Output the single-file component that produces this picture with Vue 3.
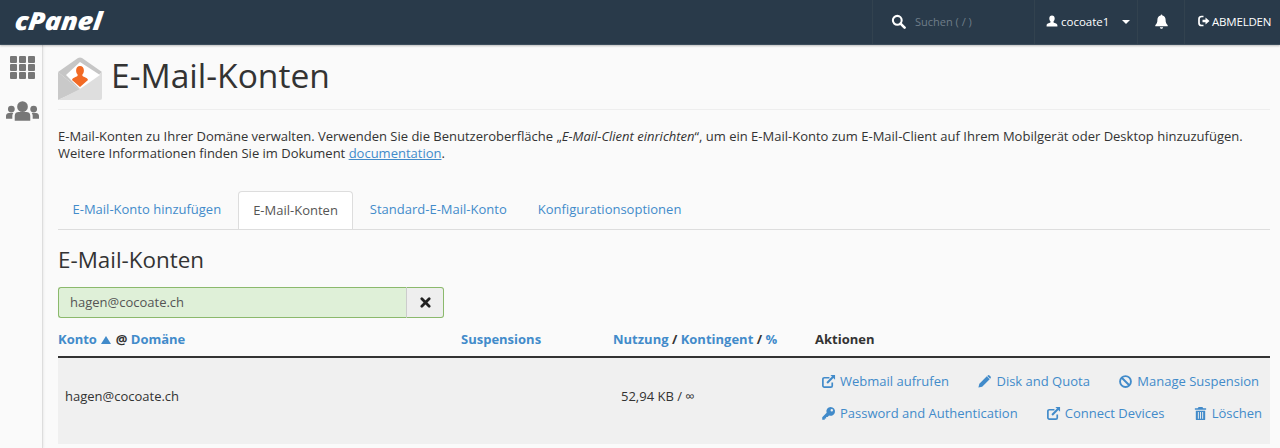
<script setup>
const rowOne = [
  { label: 'Webmail aufrufen', icon: 'ext' },
  { label: 'Disk and Quota', icon: 'pencil' },
  { label: 'Manage Suspension', icon: 'ban' }
]
const rowTwo = [
  { label: 'Password and Authentication', icon: 'key' },
  { label: 'Connect Devices', icon: 'ext' },
  { label: 'Löschen', icon: 'trash' }
]
const tabs = [
  { label: 'E-Mail-Konto hinzufügen', active: false },
  { label: 'E-Mail-Konten', active: true },
  { label: 'Standard-E-Mail-Konto', active: false },
  { label: 'Konfigurationsoptionen', active: false }
]
</script>

<template>
  <div class="page">
    <header class="topbar">
      <div class="logo">cPanel</div>
      <div class="top-right">
        <div class="search cell">
          <svg class="search-ico" viewBox="0 0 16 16"><circle cx="6.7" cy="6.7" r="4.7" fill="none" stroke="#fff" stroke-width="2.2"/><path d="M10.2 10.2 L14.5 14.5" stroke="#fff" stroke-width="2.8" stroke-linecap="round"/></svg>
          <span class="search-text">Suchen ( / )</span>
        </div>
        <div class="user cell">
          <svg class="user-ico" viewBox="0 0 12 12"><path d="M6 0.5c1.7 0 2.7 1.3 2.7 3 0 1.200-.5 2.300-1.200 2.900v.9c0 .6 3.900 1 3.900 2.900V11.500H.6V10.200c0-1.900 3.900-2.300 3.900-2.900v-.9C3.800 5.800 3.300 4.700 3.300 3.500c0-1.700 1-3 2.700-3z" fill="#fff"/></svg>
          <span>cocoate1</span>
          <span class="caret"></span>
        </div>
        <div class="bell cell">
          <svg class="bell-ico" viewBox="0 0 14 14"><path d="M7 .5c.5 0 .8.3.8.8 2 .4 3 2 3 3.900 0 3.200 1 4.300 2 5.300v1H1.200v-1c1-1 2-2.100 2-5.300 0-1.900 1-3.500 3-3.900 0-.5.300-.8.800-.8zM5.500 12.300h3c0 .9-.7 1.400-1.500 1.400s-1.500-.5-1.500-1.400z" fill="#fff"/></svg>
        </div>
        <div class="logout">
          <svg class="logout-ico" viewBox="0 0 12 12"><path d="M5.500 1.500H3.500C2 1.500 1 2.500 1 4v4c0 1.500 1 2.500 2.500 2.500h2" fill="none" stroke="#fff" stroke-width="1.700"/><path d="M4.500 4.800H7.500V2.600L11.500 6 7.500 9.400V7.200H4.500z" fill="#fff"/></svg>
          <span>ABMELDEN</span>
        </div>
      </div>
    </header>

    <div class="body">
      <aside class="side">
        <div class="grid-ico">
          <i v-for="n in 9" :key="n"></i>
        </div>
        <svg class="users-ico" viewBox="0 0 34 20">
          <circle cx="17" cy="5.500" r="5.500" fill="#777"/>
          <circle cx="5.500" cy="8" r="3.500" fill="#777"/>
          <circle cx="28.500" cy="8" r="3.500" fill="#777"/>
          <path d="M9 20v-5c0-3 2-4 4-4h8c2 0 4 1 4 4v5z" fill="#777"/>
          <path d="M0 18v-3c0-2 1.500-3 3-3h4.500c-.8 1-1 2-1 3v3zM34 18v-3c0-2-1.500-3-3-3h-4.500c.8 1 1 2 1 3v3z" fill="#777"/>
        </svg>
      </aside>

      <main class="main">
        <div class="title-row">
          <svg class="mail-ico" viewBox="0 0 44 43">
            <path d="M0 15 L20 1 Q22 0 24 1 L44 15 L22 33z" fill="#c6c6c6"/>
            <path d="M0 15 L22 33 L0 43z" fill="#c9c9c9"/>
            <path d="M0 43 L22 32 L44 15 V41 Q44 43 42 43z" fill="#dedede"/>
            <path d="M22 5 L42 18 L22 32 L8 18z" fill="#fff"/>
            <path d="M22 9c2.500 0 3.900 2 3.900 4.500 0 1.800-.7 3.200-1.500 4.100v1.200c0 1 5 1.500 5.600 4.200L22 30l-8-7c.6-2.700 5.600-3.200 5.600-4.200v-1.200c-.8-.9-1.500-2.300-1.500-4.100C18.100 11 19.500 9 22 9z" fill="#f26a25"/>
          </svg>
          <h1>E-Mail-Konten</h1>
        </div>

        <p class="intro">E-Mail-Konten zu Ihrer Domäne verwalten. Verwenden Sie die Benutzeroberfläche „<em>E-Mail-Client einrichten</em>“, um ein E-Mail-Konto zum E-Mail-Client auf Ihrem Mobilgerät oder Desktop hinzuzufügen.<br>Weitere Informationen finden Sie im Dokument <a class="doc">documentation</a>.</p>

        <nav class="tabs">
          <div v-for="t in tabs" :key="t.label" class="tab" :class="{ active: t.active }">{{ t.label }}</div>
        </nav>

        <h2>E-Mail-Konten</h2>

        <div class="filter">
          <div class="filter-input">hagen@cocoate.ch</div>
          <div class="filter-btn">
            <svg viewBox="0 0 12 12" class="x-ico"><path d="M2 2 L10 10 M10 2 L2 10" stroke="#222" stroke-width="3" stroke-linecap="round"/></svg>
          </div>
        </div>

        <div class="thead">
          <div class="c-acct"><b>Konto</b> <span class="tri"></span> <b class="at">@</b> <b>Domäne</b></div>
          <div class="c-susp"><b>Suspensions</b></div>
          <div class="c-use"><b>Nutzung</b> <b class="at">/</b> <b>Kontingent</b> <b class="at">/</b> <b>%</b></div>
          <div class="c-act"><b class="at">Aktionen</b></div>
        </div>

        <div class="tbody">
          <div class="r-mail">hagen@cocoate.ch</div>
          <div class="r-use">52,94 KB / ∞</div>
          <div class="r-actions">
            <div v-for="(row, i) in [rowOne, rowTwo]" :key="i" class="act-row">
              <span v-for="a in row" :key="a.label" class="act">
                <svg class="a-ico" viewBox="0 0 16 16">
                  <template v-if="a.icon === 'ext'">
                    <path d="M12 9v3.500c0 .8-.7 1.500-1.500 1.500h-7C2.700 14 2 13.300 2 12.500v-7C2 4.700 2.700 4 3.500 4H9" fill="none" stroke="#428bca" stroke-width="1.800"/>
                    <path d="M6.500 9.500 L13 3" stroke="#428bca" stroke-width="2.200"/>
                    <path d="M10 1h5v5z" fill="#428bca"/>
                  </template>
                  <path v-else-if="a.icon === 'pencil'" d="M1.500 14.500 L2.500 10.500 L10.500 2.500 L13.500 5.500 L5.500 13.500z M11.500 1.500 Q12.500 .8 13.300 1.500 L14.500 2.700 Q15.200 3.500 14.500 4.500 L14 5 L11 2z" fill="#428bca"/>
                  <template v-else-if="a.icon === 'ban'">
                    <circle cx="8" cy="8" r="5.800" fill="none" stroke="#428bca" stroke-width="2"/>
                    <path d="M4 4 L12 12" stroke="#428bca" stroke-width="2"/>
                  </template>
                  <path v-else-if="a.icon === 'key'" fill-rule="evenodd" d="M10.300 1a4.700 4.700 0 1 1-1.700 9.100L7 11.700H5.500v1.500H4V14.700H1.300V12L6 7.300A4.700 4.700 0 0 1 10.300 1zM11.500 3.200a1.300 1.300 0 1 0 0 2.600 1.300 1.300 0 0 0 0-2.600z" fill="#428bca"/>
                  <path v-else fill-rule="evenodd" d="M6 1h4l1 1.500h3v1.500H2V2.500h3zM3 5h10v9c0 .6-.5 1-1 1H4c-.5 0-1-.4-1-1zM5.200 6.500v7h1v-7zM7.500 6.500v7h1v-7zM9.800 6.500v7h1v-7z" fill="#428bca"/>
                </svg>{{ a.label }}
              </span>
            </div>
          </div>
        </div>
      </main>
    </div>
  </div>
</template>

<style>
html, body { margin: 0; background: #fafafa; overflow: hidden; }
</style>

<style scoped>
.page {
  width: 1280px;
  height: 448px;
  overflow: hidden;
  font-family: "Open Sans", sans-serif;
  color: #333;
  background: #fafafa;
}
.topbar {
  height: 45px;
  background: #293a4a;
  border-bottom: 1px solid #3c4d5c;
  box-sizing: border-box;
  display: flex;
  justify-content: space-between;
  box-shadow: 0 1px 2px rgba(0,0,0,.25);
  position: relative;
  z-index: 2;
}
.logo {
  margin-left: 15px;
  font-family: "Open Sans", sans-serif;
  font-size: 25px;
  font-weight: 800;
  font-style: italic;
  letter-spacing: -.2px;
  color: #fff;
  line-height: 41px;
  transform: scaleX(1.08) skewX(-6deg);
  transform-origin: left center;
}
.top-right { display: flex; height: 44px; color: #fff; font-size: 11.500px; }
.cell { display: flex; align-items: center; border-right: 1px solid #32424f; box-sizing: border-box; padding-bottom: 2px; }
.search { width: 163px; padding-left: 18px; border-left: 1px solid #32424f; }
.search-ico { width: 15px; height: 15px; margin-right: 9px; }
.search-text { color: #6f7d89; font-size: 11px; }
.user { width: 103px; padding-left: 11px; }
.user-ico { width: 12px; height: 12px; margin-right: 3px; }
.caret { width: 0; height: 0; border-left: 4px solid transparent; border-right: 4px solid transparent; border-top: 4px solid #fff; margin-left: 13px; margin-top: 2px; }
.bell { width: 47px; justify-content: center; }
.bell-ico { width: 15px; height: 15px; }
.logout { width: 95px; display: flex; align-items: center; padding-left: 13px; padding-bottom: 2px; box-sizing: border-box; font-size: 11.500px; letter-spacing: -.2px; }
.logout-ico { width: 12px; height: 12px; margin-right: 2px; }

.body { display: flex; height: 403px; }
.side {
  width: 43px;
  flex: none;
  box-sizing: border-box;
  background: #fafafa;
  border-right: 1px solid #ddd;
  box-shadow: 1px 0 2px rgba(0,0,0,.06);
  display: flex;
  flex-direction: column;
  align-items: center;
  padding-top: 11px;
  padding-left: 3px;
}
.grid-ico { display: grid; grid-template-columns: repeat(3, 7.500px); grid-auto-rows: 6.500px; gap: 1.500px; }
.grid-ico i { background: #777; border-radius: 1px; }
.users-ico { width: 33px; height: 20px; margin-top: 22px; }

.main { flex: 1; padding: 0 10px 0 15px; min-width: 0; }
.title-row { display: flex; align-items: flex-start; height: 65px; border-bottom: 1px solid #eee; padding-top: 12px; box-sizing: border-box; }
.mail-ico { width: 44px; height: 43px; flex: none; margin-right: 9px; }
h1 { margin: -2px 0 0; font-weight: 400; font-size: 33.600px; line-height: 41px; color: #333; }
.intro { margin: 18px 0 0; font-size: 13px; line-height: 17px; color: #333; width: 1212px; white-space: nowrap; }
.intro em { font-style: italic; }
.doc { color: #428bca; text-decoration: underline; }
.tabs { display: flex; margin-top: 29px; height: 39px; border-bottom: 1px solid #ddd; box-sizing: border-box; }
.tab { padding: 0 14.500px; line-height: 37px; font-size: 13px; color: #428bca; margin-right: 2px; }
.tab.active { background: #fff; color: #555; border: 1px solid #ddd; border-bottom: 0; border-radius: 4px 4px 0 0; height: 38px; box-sizing: border-box; }
h2 { margin: 0; font-weight: 400; font-size: 22.400px; line-height: 30px; margin-top: 15px; color: #333; }
.filter { display: flex; width: 386px; height: 31px; margin-top: 12px; }
.filter-input { flex: 1; box-sizing: border-box; border: 1px solid #8bb96c; border-right-color: #ccc; background: #dff0d8; border-radius: 3px 0 0 3px; padding-left: 11px; font-size: 13px; line-height: 28px; color: #555; }
.filter-btn { width: 37px; box-sizing: border-box; border: 1px solid #8bb96c; border-left: 0; background: #eee; border-radius: 0 3px 3px 0; display: flex; align-items: center; justify-content: center; }
.x-ico { width: 11px; height: 11px; }
.thead { display: flex; height: 40px; align-items: center; font-size: 13px; color: #428bca; border-bottom: 2px solid #333; box-sizing: border-box; padding-top: 4px; width: 1212px; }
.thead b { font-weight: 700; }
.thead .at { color: #333; }
.tri { display: inline-block; width: 0; height: 0; border-left: 5px solid transparent; border-right: 5px solid transparent; border-bottom: 8px solid #428bca; margin: 0 1px; }
.c-acct { width: 403px; }
.c-susp { width: 152px; }
.c-use { width: 202px; }
.tbody { width: 1212px; height: 86px; background: #f0f0f0; display: flex; font-size: 13px; box-sizing: border-box; }
.r-mail { width: 555px; padding-left: 7px; box-sizing: border-box; line-height: 76px; color: #333; }
.r-use { width: 200px; padding-left: 8px; box-sizing: border-box; line-height: 76px; color: #333; }
.r-actions { flex: 1; padding-top: 7px; padding-right: 8px; }
.act-row { display: flex; justify-content: space-between; height: 32px; align-items: center; white-space: nowrap; padding-left: 8px; }
.act-row:first-child { padding-right: 3px; }
.act { color: #428bca; display: inline-flex; align-items: center; }
.a-ico { width: 15px; height: 15px; margin-right: 4px; flex: none; }
</style>
